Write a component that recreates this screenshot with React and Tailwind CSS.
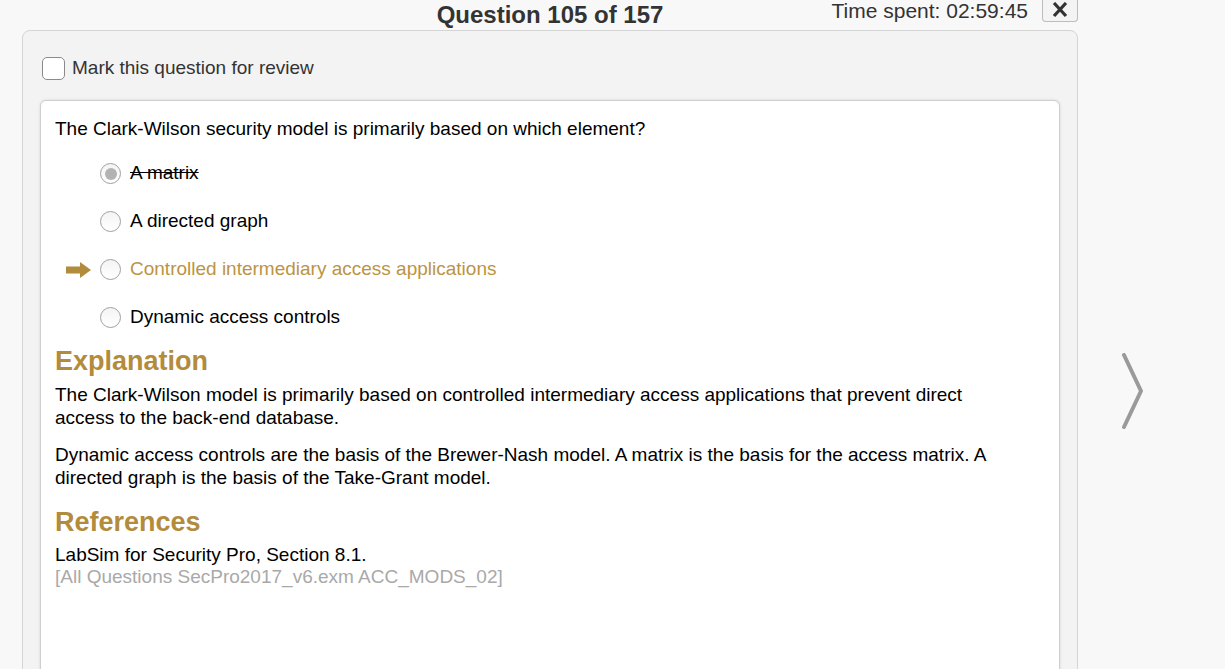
import React from "react";

const options = [
  { label: "A matrix", struck: true, selected: true },
  { label: "A directed graph" },
  { label: "Controlled intermediary access applications", correct: true },
  { label: "Dynamic access controls" },
];

const Radio = ({ selected }) => (
  <span className="w-[21px] h-[21px] rounded-full border border-[#a0a0a0] bg-gradient-to-b from-[#f4f4f4] to-white flex items-center justify-center shrink-0">
    {selected && <span className="w-[12px] h-[12px] rounded-full bg-[#b3b3b3]" />}
  </span>
);

const Arrow = () => (
  <svg width="25" height="16" viewBox="0 0 25 16" className="shrink-0">
    <path d="M0 4.5 H14 V0 L25 8 L14 16 V11.5 H0 Z" fill="#b38b3c" />
  </svg>
);

const App = () => {
  return (
    <div className="min-h-[669px] h-[669px] overflow-hidden bg-[#f8f8f8] font-['Liberation_Sans',Arial,sans-serif] text-black flex">
      <div className="ml-[22px] w-[1056px] flex flex-col">
        {/* header */}
        <div className="h-[31px] grid grid-cols-[1fr_auto_1fr] items-start">
          <div />
          <h1 className="text-[24px] font-bold text-[#333] leading-[30px]">Question 105 of 157</h1>
          <div className="flex justify-end items-start">
            <span className="text-[21px] leading-[21px] text-[#333] mr-[14px]">Time spent: 02:59:45</span>
            <button className="w-[36px] h-[24px] -mt-[2px] rounded-b-[4px] border border-t-0 border-[#bcbcbc] bg-[#f4f4f4] flex items-center justify-center">
              <svg width="16" height="16" viewBox="0 0 16 16">
                <path d="M2 1 L14 14 M14 1 L2 14" stroke="#333" strokeWidth="3.2" />
              </svg>
            </button>
          </div>
        </div>

        {/* panel */}
        <div className="flex-1 bg-[#f3f3f3] border border-[#d4d4d4] rounded-t-[8px] px-[17px]">
          <label className="flex items-center gap-[7px] mt-[23px] ml-[2px]">
            <span className="w-[23px] h-[23px] rounded-[5px] border border-[#8a8a8a] bg-white" />
            <span className="text-[19px] text-[#333]">Mark this question for review</span>
          </label>

          <div className="mt-[17px] h-[600px] bg-white border border-[#cfcfcf] rounded-t-[6px] shadow-[0_0_3px_rgba(0,0,0,0.12)] pl-[14px] pt-[16px]">
            <p className="text-[19px] leading-[24px]">The Clark-Wilson security model is primarily based on which element?</p>

            <div className="mt-[9px]">
              {options.map((o, i) => (
                <div key={i} className="h-[48px] flex items-center">
                  <div className="w-[45px] flex justify-start pl-[11px]">{o.correct && <Arrow />}</div>
                  <Radio selected={o.selected} />
                  <span
                    className={
                      "ml-[9px] text-[19px] " +
                      (o.correct ? "text-[#bb9444]" : "text-black") +
                      (o.struck ? " line-through" : "")
                    }
                  >
                    {o.label}
                  </span>
                </div>
              ))}
            </div>

            <h2 className="mt-[3px] text-[27px] leading-[32px] font-bold text-[#b38b3c]">Explanation</h2>
            <div className="max-w-[955px] text-[19px] leading-[23px]">
              <p className="mt-[6px]">
                The Clark-Wilson model is primarily based on controlled intermediary access applications that prevent direct access to the back-end database.
              </p>
              <p className="mt-[14px]">
                Dynamic access controls are the basis of the Brewer-Nash model. A matrix is the basis for the access matrix. A directed graph is the basis of the Take-Grant model.
              </p>
            </div>

            <h2 className="mt-[17px] text-[27px] leading-[32px] font-bold text-[#b38b3c]">References</h2>
            <div className="mt-[6px] text-[19px] leading-[22px]">
              <p>LabSim for Security Pro, Section 8.1.</p>
              <p className="text-[#a9a9a9]">[All Questions SecPro2017_v6.exm ACC_MODS_02]</p>
            </div>
          </div>
        </div>
      </div>

      {/* next chevron */}
      <div className="ml-[44px] mt-[353px]">
        <svg width="22" height="76" viewBox="0 0 22 76">
          <path d="M2 2 L19 38 L2 74" stroke="#9a9a9a" strokeWidth="4" fill="none" strokeLinecap="round" strokeLinejoin="round" />
        </svg>
      </div>
    </div>
  );
};

export default App;
